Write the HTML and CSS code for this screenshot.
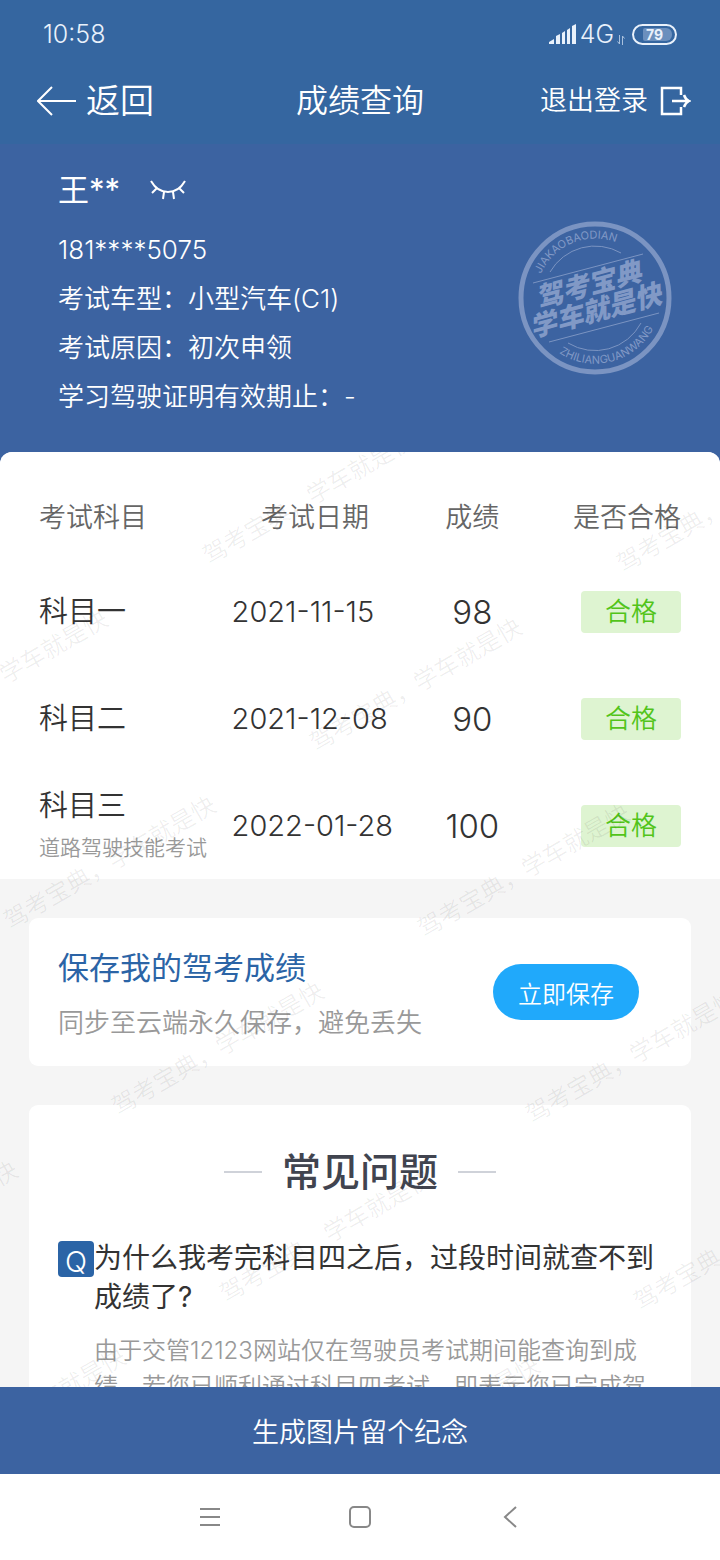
FILE: index.html
```html
<!DOCTYPE html>
<html lang="zh-CN">
<head>
    <meta charset="UTF-8">
    <meta name="viewport" content="width=device-width, initial-scale=1.0">
    <title>成绩查询</title>
    <link rel="stylesheet" href="styles.css">
</head>
<body>
    <header class="header">
        <div class="status-bar">
            <span class="time">10:58</span>
            <div class="status-icons">
                <svg class="signal" width="28" height="20" viewBox="0 0 28 20" fill="#e9f1fb">
                    <path d="M0 20v-2l5-3v5zM7 20v-8l4-2v10zM13 20v-11l3-2v13zM18 20v-14l3-2v16zM23 20V2l4-2v20z"/>
                </svg>
                <span class="network">4G</span>
                <svg class="arrows" width="8" height="10" viewBox="0 0 8 10" fill="none" stroke="#a9c0dd">
                    <path d="M2.500 0v9L.5 6.500M5.500 10V1l2 2.500"/>
                </svg>
                <span class="battery"><span class="battery-level">79</span></span>
            </div>
        </div>
        <div class="nav">
            <button type="button" class="back">
                <svg width="40" height="30" viewBox="0 0 40 30" fill="none" stroke="#fff" stroke-width="2">
                    <path d="M15 1L1 15l14 14M1 15h38"/>
                </svg>
                返回
            </button>
            <h1>成绩查询</h1>
            <button type="button" class="logout">
                退出登录
                <svg width="31" height="30" viewBox="0 0 31 30" fill="none" stroke="#fff" stroke-width="2.500">
                    <path d="M21 9V2H2v26h19v-7M12 15h17M24 9c1 3 3 5 5 6c-2 1-4 3-5 6"/>
                </svg>
            </button>
        </div>
    </header>

    <!-- 考生信息 -->
    <section class="profile">
        <div class="info">
            <div class="name">
                王**
                <svg width="36" height="20" viewBox="0 0 36 20" fill="none" stroke="#fff" stroke-width="2">
                    <path d="M1 1c4 7 10 11 17 11s13-4 17-11M7 8l-5 5M14 12l-1 7M23 12l1 7M29 8l5 5"/>
                </svg>
            </div>
            <p class="phone">181****5075</p>
            <p>考试车型：小型汽车(C1)</p>
            <p>考试原因：初次申领</p>
            <p>学习驾驶证明有效期止：-</p>
        </div>
        <svg class="stamp" width="154" height="154" viewBox="0 0 154 154">
            <defs>
                <path id="arcTop" d="M23 53A59 59 0 0 1 120 36"/>
                <path id="arcBottom" d="M41 132A66 66 0 0 0 143 77"/>
            </defs>
            <circle cx="77" cy="77" r="74" fill="none" stroke-width="5"/>
            <path class="thin" d="M15 62L125 33M31 121L141 92M32 51A52 52 0 0 1 103 32M50 122A52 52 0 0 0 123 102"/>
            <text class="ring"><textPath href="#arcTop">JIAKAOBAODIAN</textPath></text>
            <text class="ring"><textPath href="#arcBottom">ZHILIANGUANWANG</textPath></text>
            <g class="slogan" transform="rotate(-15 77 77)">
                <text x="74" y="72">驾考宝典</text>
                <text x="74" y="99">学车就是快</text>
            </g>
        </svg>
    </section>

    <main class="content">
        <div class="scroll">
            <!-- 成绩列表 -->
            <section class="scores">
                <table>
                    <thead>
                        <tr>
                            <th class="subject">考试科目</th>
                            <th class="date">考试日期</th>
                            <th class="score">成绩</th>
                            <th class="pass">是否合格</th>
                        </tr>
                    </thead>
                    <tbody>
                        <tr>
                            <td class="subject">科目一</td>
                            <td class="date">2021-11-15</td>
                            <td class="score">98</td>
                            <td class="pass"><span class="tag">合格</span></td>
                        </tr>
                        <tr>
                            <td class="subject">科目二</td>
                            <td class="date">2021-12-08</td>
                            <td class="score">90</td>
                            <td class="pass"><span class="tag">合格</span></td>
                        </tr>
                        <tr>
                            <td class="subject">科目三<small>道路驾驶技能考试</small></td>
                            <td class="date">2022-01-28</td>
                            <td class="score">100</td>
                            <td class="pass"><span class="tag">合格</span></td>
                        </tr>
                    </tbody>
                </table>
            </section>

            <section class="card save">
                <div>
                    <h2>保存我的驾考成绩</h2>
                    <p>同步至云端永久保存，避免丢失</p>
                </div>
                <button type="button" class="save-btn">立即保存</button>
            </section>

            <!-- 常见问题 -->
            <section class="card faq">
                <h2>常见问题</h2>
                <div class="faq-item">
                    <span class="q-icon">Q</span>
                    <div>
                        <h3>为什么我考完科目四之后，过段时间就查不到成绩了?</h3>
                        <p>由于交管12123网站仅在驾驶员考试期间能查询到成绩，若您已顺利通过科目四考试，即表示您已完成驾</p>
                    </div>
                </div>
            </section>
        </div>

        <!-- 水印 -->
        <svg class="watermark" aria-hidden="true">
            <defs>
                <text id="mark" transform="rotate(-30)">驾考宝典，学车就是快</text>
            </defs>
            <use href="#mark" x="209" y="113"/>
            <use href="#mark" x="623" y="121"/>
            <use href="#mark" x="-98" y="292"/>
            <use href="#mark" x="316" y="300"/>
            <use href="#mark" x="10" y="478"/>
            <use href="#mark" x="424" y="486"/>
            <use href="#mark" x="118" y="664"/>
            <use href="#mark" x="532" y="672"/>
            <use href="#mark" x="-188" y="843"/>
            <use href="#mark" x="226" y="851"/>
            <use href="#mark" x="640" y="859"/>
            <use href="#mark" x="-80" y="1030"/>
            <use href="#mark" x="334" y="1038"/>
        </svg>
    </main>

    <button type="button" class="share-btn">生成图片留个纪念</button>

    <footer class="system-nav">
        <svg width="22" height="22" viewBox="0 0 22 22"><path d="M1 3h20M1 11h20M1 19h20"/></svg>
        <svg width="22" height="22" viewBox="0 0 22 22"><rect x="1" y="1" width="20" height="20" rx="4"/></svg>
        <svg width="22" height="22" viewBox="0 0 22 22"><path d="M17 1L6 11l11 10"/></svg>
    </footer>
</body>
</html>
```

FILE: styles.css
```css
* {
    box-sizing: border-box;
}
body {
    margin: 0;
    height: 100vh;
    display: flex;
    flex-direction: column;
    background: #3c63a1;
    color: #333;
    font-family: Inter, "Noto Sans CJK SC", sans-serif;
    font-weight: 350;
}
h1, h2, h3, p {
    margin: 0;
    font-weight: 350;
}
button {
    padding: 0;
    border: none;
    background: none;
    color: #fff;
    font-family: inherit;
    font-weight: 350;
    cursor: pointer;
}
svg {
    flex: none;
}

/* 顶部 */
.header {
    background: #3566a0;
    color: #fff;
    padding-bottom: 10px;
}
.status-bar {
    height: 68px;
    padding: 0 43px;
    display: flex;
    align-items: center;
    justify-content: space-between;
    color: #e9f1fb;
}
.time {
    font-size: 25px;
}
.status-icons {
    display: flex;
    align-items: center;
    gap: 3px;
}
.network {
    font-size: 25px;
}
.arrows {
    align-self: flex-end;
    margin-bottom: 4px;
}
.battery {
    width: 45px;
    height: 21px;
    margin-left: 4px;
    padding: 2px 3px 2px 9px;
    border: 2px solid #e9f1fb;
    border-radius: 11px;
}
.battery-level {
    display: block;
    height: 13px;
    padding-left: 3px;
    border-radius: 2px 6px 6px 2px;
    background: #6b8fbd;
    font-size: 14px;
    font-weight: 700;
    line-height: 13px;
}
.nav {
    height: 66px;
    padding: 0 29px;
    display: grid;
    grid-template-columns: 1fr auto 1fr;
    align-items: center;
}
.nav h1 {
    font-size: 32px;
    line-height: 48px;
}
.back, .logout {
    display: flex;
    align-items: center;
    line-height: 48px;
}
.back {
    gap: 9px;
    padding-left: 8px;
    font-size: 34px;
}
.logout {
    justify-self: end;
    gap: 12px;
    font-size: 27px;
}

/* 考生信息 */
.profile {
    padding: 0 48px 0 58px;
    display: flex;
    align-items: center;
    justify-content: space-between;
    color: #fff;
}
.info {
    padding: 16px 0 31px;
}
.name {
    display: flex;
    align-items: center;
    gap: 30px;
    margin-bottom: 5px;
    font-size: 31px;
    font-weight: 400;
    line-height: 60px;
}
.info p {
    font-size: 26px;
    line-height: 49px;
}
.stamp {
    fill: #8199c6;
    stroke: none;
}
.stamp circle, .stamp .thin {
    fill: none;
    stroke: #7b94c2;
}
.ring {
    font-size: 11px;
    font-weight: 400;
}
.slogan {
    font-size: 27px;
    font-weight: 900;
    font-style: italic;
    text-anchor: middle;
}

/* 成绩 */
.content {
    position: relative;
    flex: 1;
    min-height: 0;
    overflow: hidden;
    border-radius: 12px 12px 0 0;
    background: #f5f5f5;
}
.scroll {
    height: 100%;
    overflow-y: auto;
    scrollbar-width: none;
}
.scores {
    padding: 20px 39px 0;
    background: #fff;
}
table {
    width: 100%;
    border-collapse: collapse;
    table-layout: fixed;
}
th, td {
    padding: 0;
    text-align: left;
    font-weight: 350;
}
th {
    height: 86px;
    color: #666;
    font-size: 27px;
}
td {
    height: 107px;
    font-size: 29px;
    line-height: 44px;
}
.subject {
    width: 30%;
}
.subject small {
    display: block;
    color: #999;
    font-size: 21px;
    line-height: 40px;
}
.date {
    width: 26%;
}
.score {
    width: 23%;
}
th.date, .score {
    text-align: center;
}
td.score {
    font-size: 33px;
}
.pass {
    text-align: right;
}
.tag {
    display: block;
    width: 100px;
    margin-left: auto;
    border-radius: 4px;
    background: #def4d1;
    color: #52c41a;
    font-size: 26px;
    line-height: 42px;
    text-align: center;
}

/* 卡片 */
.card {
    margin: 39px 29px 0;
    border-radius: 9px;
    background: #fff;
}
.save {
    height: 148px;
    padding: 0 52px 0 29px;
    display: flex;
    align-items: center;
    justify-content: space-between;
}
.save div {
    padding-top: 6px;
}
.save h2 {
    color: #2b64a6;
    font-size: 31px;
    font-weight: 400;
    line-height: 56px;
}
.save p {
    color: #999;
    font-size: 26px;
    line-height: 54px;
}
.save-btn {
    width: 146px;
    height: 56px;
    border-radius: 28px;
    background: #20a9fb;
    font-size: 24px;
}
.faq {
    padding: 36px 29px;
}
.faq h2 {
    display: flex;
    align-items: center;
    justify-content: center;
    gap: 20px;
    margin-bottom: 36px;
    color: #41444f;
    font-size: 39px;
    font-weight: 500;
    line-height: 62px;
}
.faq h2::before, .faq h2::after {
    content: "";
    width: 38px;
    height: 2px;
    background: #cfd2d9;
}
.faq-item {
    display: flex;
    align-items: flex-start;
}
.q-icon {
    flex: none;
    width: 36px;
    height: 36px;
    margin-top: 2px;
    border-radius: 4px;
    background: #2b64a6;
    color: #fff;
    font-size: 29px;
    line-height: 42px;
    text-align: center;
}
.faq h3 {
    margin-bottom: 16px;
    font-size: 28px;
    font-weight: 400;
    line-height: 39px;
}
.faq p {
    color: #999;
    font-size: 24px;
    line-height: 36px;
}
.watermark {
    position: absolute;
    inset: 0;
    width: 100%;
    height: 100%;
    fill: #000;
    fill-opacity: 0.07;
    font-size: 24px;
    pointer-events: none;
}

/* 底部 */
.share-btn {
    flex: none;
    height: 87px;
    font-size: 27px;
}
.system-nav {
    flex: none;
    height: 86px;
    display: flex;
    align-items: center;
    justify-content: center;
    gap: 128px;
    background: #fff;
    fill: none;
    stroke: #888;
    stroke-width: 2;
}
```
